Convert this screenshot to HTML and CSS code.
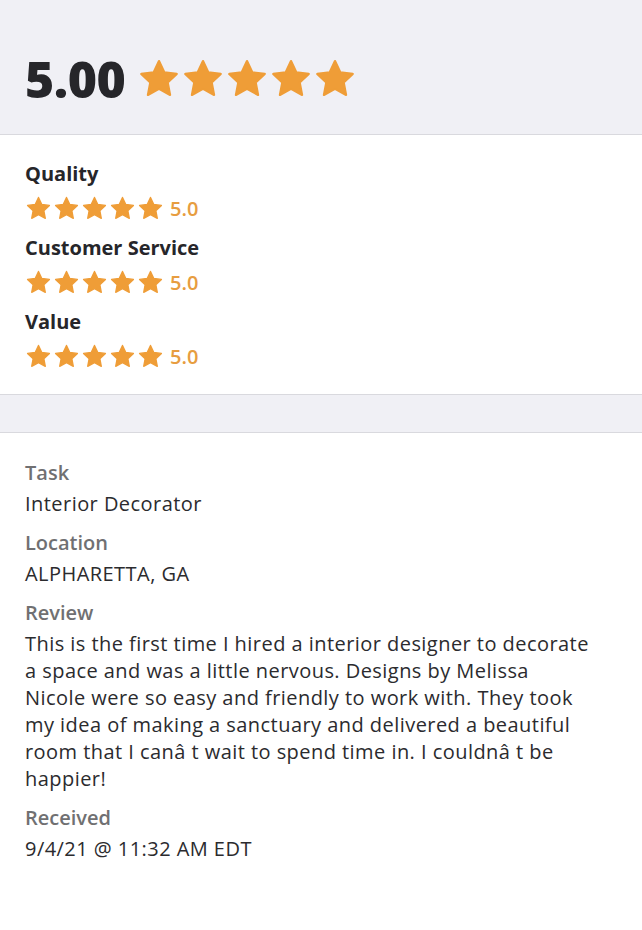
FILE: index.html
```html
<!DOCTYPE html>
<html lang="en">
<head>
<meta charset="utf-8">
<title>Review</title>
<link rel="stylesheet" href="styles.css">
</head>
<body>
<svg width="0" height="0" class="defs" aria-hidden="true">
  <defs>
    <symbol id="star" viewBox="0 0 24 24">
      <path d="M12 2.2l2.95 6.2 6.75.85-4.95 4.7 1.3 6.75L12 17.4l-6.05 3.3 1.3-6.75-4.95-4.7 6.75-.85z" stroke="currentColor" stroke-width="1.2" stroke-linejoin="round" fill="currentColor"/>
    </symbol>
  </defs>
</svg>

<header class="overall">
  <span class="overall-score">5.00</span>
  <span class="stars stars-lg">
    <svg><use href="#star"/></svg><svg><use href="#star"/></svg><svg><use href="#star"/></svg><svg><use href="#star"/></svg><svg><use href="#star"/></svg>
  </span>
</header>

<section class="ratings">
  <div class="rating">
    <div class="rating-label">Quality</div>
    <div class="rating-row">
      <span class="stars stars-sm"><svg><use href="#star"/></svg><svg><use href="#star"/></svg><svg><use href="#star"/></svg><svg><use href="#star"/></svg><svg><use href="#star"/></svg></span>
      <span class="rating-value">5.0</span>
    </div>
  </div>
  <div class="rating">
    <div class="rating-label">Customer Service</div>
    <div class="rating-row">
      <span class="stars stars-sm"><svg><use href="#star"/></svg><svg><use href="#star"/></svg><svg><use href="#star"/></svg><svg><use href="#star"/></svg><svg><use href="#star"/></svg></span>
      <span class="rating-value">5.0</span>
    </div>
  </div>
  <div class="rating">
    <div class="rating-label">Value</div>
    <div class="rating-row">
      <span class="stars stars-sm"><svg><use href="#star"/></svg><svg><use href="#star"/></svg><svg><use href="#star"/></svg><svg><use href="#star"/></svg><svg><use href="#star"/></svg></span>
      <span class="rating-value">5.0</span>
    </div>
  </div>
</section>

<div class="divider-band"></div>

<section class="details">
  <div class="field">
    <div class="field-label">Task</div>
    <div class="field-value">Interior Decorator</div>
  </div>
  <div class="field">
    <div class="field-label">Location</div>
    <div class="field-value">ALPHARETTA, GA</div>
  </div>
  <div class="field">
    <div class="field-label">Review</div>
    <div class="field-value">This is the first time I hired a interior designer to decorate a space and was a little nervous. Designs by Melissa Nicole were so easy and friendly to work with. They took my idea of making a sanctuary and delivered a beautiful room that I canâ t wait to spend time in. I couldnâ t be happier!</div>
  </div>
  <div class="field">
    <div class="field-label">Received</div>
    <div class="field-value">9/4/21 @ 11:32 AM EDT</div>
  </div>
</section>
</body>
</html>
```

FILE: styles.css
```css
* { box-sizing: border-box; }

html, body {
  margin: 0;
  padding: 0;
  background: #ffffff;
}

body {
  font-family: "Open Sans", "Liberation Sans", sans-serif;
  color: #2b2b2e;
  width: 642px;
}

.defs {
  position: absolute;
  width: 0;
  height: 0;
  overflow: hidden;
}

.overall {
  height: 135px;
  background: #f0f0f5;
  border-bottom: 1px solid #d9d9de;
  display: flex;
  align-items: center;
  padding: 24px 25px 0 25px;
  gap: 12px;
}

.overall-score {
  font-size: 50px;
  font-weight: 800;
  letter-spacing: -0.5px;
  line-height: 1;
  color: #26262a;
}

.stars {
  display: inline-flex;
  color: #ef9d37;
}

.stars-lg {
  gap: 0;
}
.stars-lg svg {
  width: 44px;
  height: 44px;
}

.stars-sm {
  gap: 1px;
}
.stars-sm svg {
  width: 27px;
  height: 27px;
}

.ratings {
  padding: 25px 25px 24px;
  display: flex;
  flex-direction: column;
  gap: 12px;
}

.rating {
  display: flex;
  flex-direction: column;
  gap: 8px;
}

.rating-label {
  font-size: 20px;
  font-weight: 700;
  line-height: 27px;
  color: #26262a;
}

.rating-row {
  display: flex;
  align-items: center;
  gap: 6px;
  height: 27px;
}

.rating-value {
  font-size: 20px;
  font-weight: 600;
  color: #e79d40;
  line-height: 27px;
}

.divider-band {
  height: 39px;
  background: #f0f0f5;
  border-top: 1px solid #d9d9de;
  border-bottom: 1px solid #d9d9de;
}

.details {
  padding: 26px 25px 40px;
  display: flex;
  flex-direction: column;
  gap: 12px;
}

.field {
  display: flex;
  flex-direction: column;
  gap: 4px;
}

.field-label {
  font-size: 20px;
  font-weight: 600;
  line-height: 27px;
  color: #707072;
}

.field-value {
  font-size: 20px;
  font-weight: 400;
  line-height: 27px;
  letter-spacing: 0.45px;
  color: #2b2b2e;
  max-width: 568px;
}
```
